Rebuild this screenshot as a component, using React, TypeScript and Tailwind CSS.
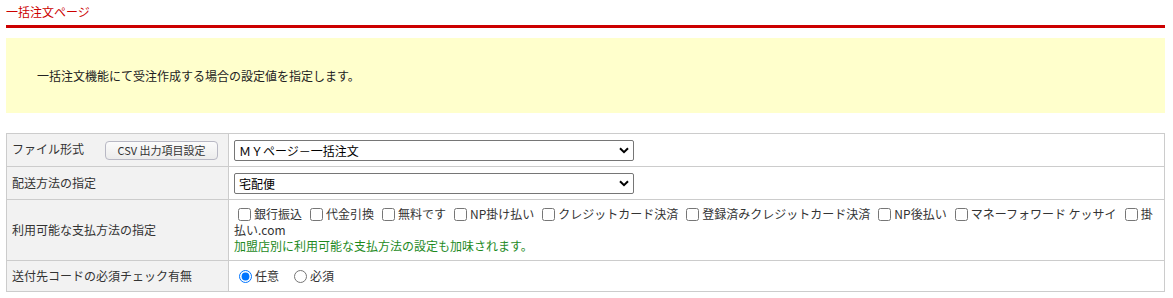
import React, { useState } from "react";

const payments = [
  "銀行振込",
  "代金引換",
  "無料です",
  "NP掛け払い",
  "クレジットカード決済",
  "登録済みクレジットカード決済",
  "NP後払い",
  "マネーフォワード ケッサイ",
  "掛払い.com",
];

function Select({ value, options }: { value: string; options: string[] }) {
  const [v, setV] = useState(value);
  return (
    <div className="relative w-[400px]">
      <select
        value={v}
        onChange={(e) => setV(e.target.value)}
        className="block h-[21px] w-full appearance-none rounded-[2px] border border-[#767676] bg-white pl-[4px] pr-6 text-[12px] leading-[19px] text-black outline-none"
      >
        {options.map((o) => (
          <option key={o} value={o}>
            {o}
          </option>
        ))}
      </select>
      <svg
        className="pointer-events-none absolute right-[5px] top-[7px]"
        width="10"
        height="7"
        viewBox="0 0 10 7"
      >
        <path d="M1 1.2 L5 5.2 L9 1.2" fill="none" stroke="#000" strokeWidth="2" />
      </svg>
    </div>
  );
}

export default function App() {
  const [checked, setChecked] = useState<Record<string, boolean>>({});
  const [required, setRequired] = useState("any");

  return (
    <div
      className="min-h-[298px] bg-white pl-[6px] pr-[8px] text-[12px] text-[#333]"
      style={{ fontFamily: '"Noto Sans CJK JP", sans-serif' }}
    >
      <div className="border-b-[3px] border-[#cc0000] pb-[5px] pt-[3px] text-[12px] leading-[17px] text-[#cc0000]">
        一括注文ページ
      </div>

      <div className="mt-[10px] flex h-[75px] items-center bg-[#ffffcc] pl-[31px] text-[12px] text-[#222]">
        一括注文機能にて受注作成する場合の設定値を指定します。
      </div>

      <table className="mt-[20px] w-full border-collapse border border-[#cccccc] text-[12px] leading-[16px]">
        <tbody>
          <tr className="h-[33px]">
            <th className="w-[222px] border border-[#cccccc] bg-[#f2f2f2] px-[5px] text-left align-middle font-normal">
              <div className="flex items-center justify-between pr-[5px]">
                <span className="-mt-[3px]">ファイル形式</span>
                <button className="h-[19px] w-[113px] rounded-[4px] border border-[#b8b8c4] bg-gradient-to-b from-[#fbfbfb] to-[#ececec] text-[11px] leading-[17px] text-[#333]">
                  CSV 出力項目設定
                </button>
              </div>
            </th>
            <td className="border border-[#cccccc] px-[5px] align-middle">
              <Select value="ＭＹページ－一括注文" options={["ＭＹページ－一括注文"]} />
            </td>
          </tr>
          <tr className="h-[33px]">
            <th className="border border-[#cccccc] bg-[#f2f2f2] px-[5px] text-left align-middle font-normal">
              配送方法の指定
            </th>
            <td className="border border-[#cccccc] px-[5px] align-middle">
              <Select value="宅配便" options={["宅配便", "メール便"]} />
            </td>
          </tr>
          <tr className="h-[61px]">
            <th className="border border-[#cccccc] bg-[#f2f2f2] px-[5px] text-left align-middle font-normal">
              利用可能な支払方法の指定
            </th>
            <td className="border border-[#cccccc] px-[5px] pb-[4px] pt-[3px] align-middle">
              <div className="leading-[16px]">
                {payments.map((p) => (
                  <label key={p} className="mr-[4px]">
                    <input
                      type="checkbox"
                      checked={!!checked[p]}
                      onChange={() => setChecked({ ...checked, [p]: !checked[p] })}
                      className="m-0 ml-[4px] mr-[3px] inline-block h-[13px] w-[13px] align-[-2px]"
                    />
                    {p}
                  </label>
                ))}
              </div>
              <div className="text-[#1e8a1e]">加盟店別に利用可能な支払方法の設定も加味されます。</div>
            </td>
          </tr>
          <tr className="h-[31px]">
            <th className="border border-[#cccccc] bg-[#f2f2f2] px-[5px] text-left align-middle font-normal">
              送付先コードの必須チェック有無
            </th>
            <td className="border border-[#cccccc] px-[5px] align-middle">
              <label className="mr-[10px]">
                <input
                  type="radio"
                  name="req"
                  checked={required === "any"}
                  onChange={() => setRequired("any")}
                  className="m-0 ml-[5px] mr-[3px] inline-block h-[13px] w-[13px] align-[-2px]"
                />
                任意
              </label>
              <label>
                <input
                  type="radio"
                  name="req"
                  checked={required === "must"}
                  onChange={() => setRequired("must")}
                  className="m-0 ml-[5px] mr-[3px] inline-block h-[13px] w-[13px] align-[-2px]"
                />
                必須
              </label>
            </td>
          </tr>
        </tbody>
      </table>
    </div>
  );
}
